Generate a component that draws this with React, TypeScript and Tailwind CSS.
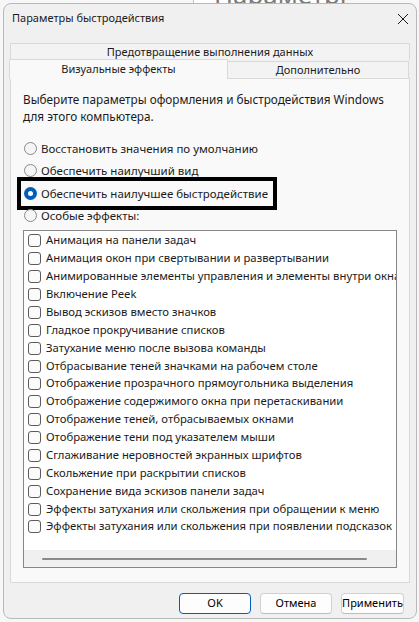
import React from 'react';

const font = { fontFamily: '"Noto Sans", "Open Sans", sans-serif' };

const effects = [
  'Анимация на панели задач',
  'Анимация окон при свертывании и развертывании',
  'Анимированные элементы управления и элементы внутри окна',
  'Включение Peek',
  'Вывод эскизов вместо значков',
  'Гладкое прокручивание списков',
  'Затухание меню после вызова команды',
  'Отбрасывание теней значками на рабочем столе',
  'Отображение прозрачного прямоугольника выделения',
  'Отображение содержимого окна при перетаскивании',
  'Отображение теней, отбрасываемых окнами',
  'Отображение тени под указателем мыши',
  'Сглаживание неровностей экранных шрифтов',
  'Скольжение при раскрытии списков',
  'Сохранение вида эскизов панели задач',
  'Эффекты затухания или скольжения при обращении к меню',
  'Эффекты затухания или скольжения при появлении подсказок',
];

const radios = [
  'Восстановить значения по умолчанию',
  'Обеспечить наилучший вид',
  'Обеспечить наилучшее быстродействие',
  'Особые эффекты:',
];

function Radio({ checked }: { checked?: boolean }) {
  if (checked) {
    return (
      <span className="flex h-[13px] w-[13px] shrink-0 items-center justify-center rounded-full bg-[#005fb8]">
        <span className="h-[5px] w-[5px] rounded-full bg-white" />
      </span>
    );
  }
  return <span className="h-[13px] w-[13px] shrink-0 rounded-full border border-[#8a8a8a] bg-[#f5f5f5]" />;
}

function Button({ label, primary, width }: { label: string; primary?: boolean; width: string }) {
  return (
    <button
      className={
        primary
          ? 'h-[21px] w-[72px] rounded-[4px] border border-[#005fb8] bg-[#fdfdfd] text-[11px] text-black'
          : `h-[21px] ${width} rounded-[4px] border border-[#d1d1d1] border-b-[#bcbcbc] bg-[#fdfdfd] text-[11px] text-black`
      }
    >
      {label}
    </button>
  );
}

export default function App() {
  const selected = 2;

  return (
    <div className="relative h-[622px] w-[419px] overflow-hidden bg-[#f7f7f7] text-[#1b1b1b]" style={font}>
      {/* fragment of the window behind */}
      <div className="absolute left-[193px] top-[-22px] h-[26px] w-[152px] overflow-hidden border border-[#c4c4c4] bg-white pl-[20px] text-[26px] leading-[30px] text-[#7a7a7a]">
        Параметры
      </div>

      <div className="relative ml-[3px] mt-[3px] flex h-[616px] w-[414px] flex-col rounded-[8px] border border-[#b9b9b9] bg-[#f0f0f0]">
        {/* title bar */}
        <div className="flex h-[27px] items-center justify-between pl-[8px] pr-[6px] pt-[2px]">
          <span className="text-[11px]">Параметры быстродействия</span>
          <svg width="12" height="12" viewBox="0 0 12 12" className="mr-[1px]">
            <path d="M1 1 L11 11 M11 1 L1 11" stroke="#1b1b1b" strokeWidth="1" />
          </svg>
        </div>

        <div className="ml-[6px] mt-[12px] flex w-[400px] flex-col">
          {/* tabs */}
          <div className="flex h-[17px] items-center justify-center border border-b-0 border-[#d9d9d9] bg-[#f3f3f3] text-[11px]">
            Предотвращение выполнения данных
          </div>
          <div className="relative z-10 -mb-px flex items-end">
            <div className="-ml-px -mt-px flex h-[20px] w-[219px] items-center justify-center border border-b-0 border-[#d9d9d9] bg-[#f9f9f9] pb-[1px] text-[11px]">
              Визуальные эффекты
            </div>
            <div className="flex h-[18px] w-[181px] items-center justify-center border border-b-[#d9d9d9] border-l-0 border-[#d9d9d9] bg-[#f3f3f3] pt-[1px] text-[11px]">
              Дополнительно
            </div>
          </div>

          {/* panel */}
          <div className="flex h-[505px] flex-col border border-[#d9d9d9] bg-[#f9f9f9] pl-[12px] pt-[12px]">
            <p className="text-[11.75px] leading-[17px]">
              Выберите параметры оформления и быстродействия Windows
              <br />
              для этого компьютера.
            </p>

            <div className="mt-[12px] flex flex-col">
              {radios.map((r, i) => (
                <div key={r} className="relative flex h-[22.5px] items-center gap-[4px] pl-[1px]">
                  <Radio checked={i === selected} />
                  <span className="text-[11.5px]">{r}</span>
                  {i === selected && (
                    <div className="pointer-events-none absolute left-[-6px] top-[-5px] h-[33px] w-[260px] border-[4px] border-black" />
                  )}
                </div>
              ))}
            </div>

            {/* list */}
            <div className="mt-[3px] flex h-[338px] w-[374px] flex-col border border-[#868686] bg-white">
              <div className="flex-1 overflow-hidden pt-[1px]">
                {effects.map((e) => (
                  <div key={e} className="flex h-[17.875px] items-center gap-[5px] whitespace-nowrap pl-[4px]">
                    <span className="h-[13px] w-[13px] shrink-0 rounded-[3px] border border-[#5c5c5c] bg-[#fbfbfb]" />
                    <span className="text-[11.3px]">{e}</span>
                  </div>
                ))}
              </div>
              <div className="flex h-[17px] items-center bg-[#f0f0f0] pl-[18px]">
                <div className="h-[2px] w-[325px] rounded-full bg-[#8a8a8a]" />
              </div>
            </div>
          </div>
        </div>

        {/* buttons */}
        <div className="mr-[12px] mt-[10px] flex justify-end gap-[9px]">
          <Button label="OK" primary width="w-[72px]" />
          <Button label="Отмена" width="w-[72px]" />
          <Button label="Применить" width="w-[63px]" />
        </div>
      </div>
    </div>
  );
}
